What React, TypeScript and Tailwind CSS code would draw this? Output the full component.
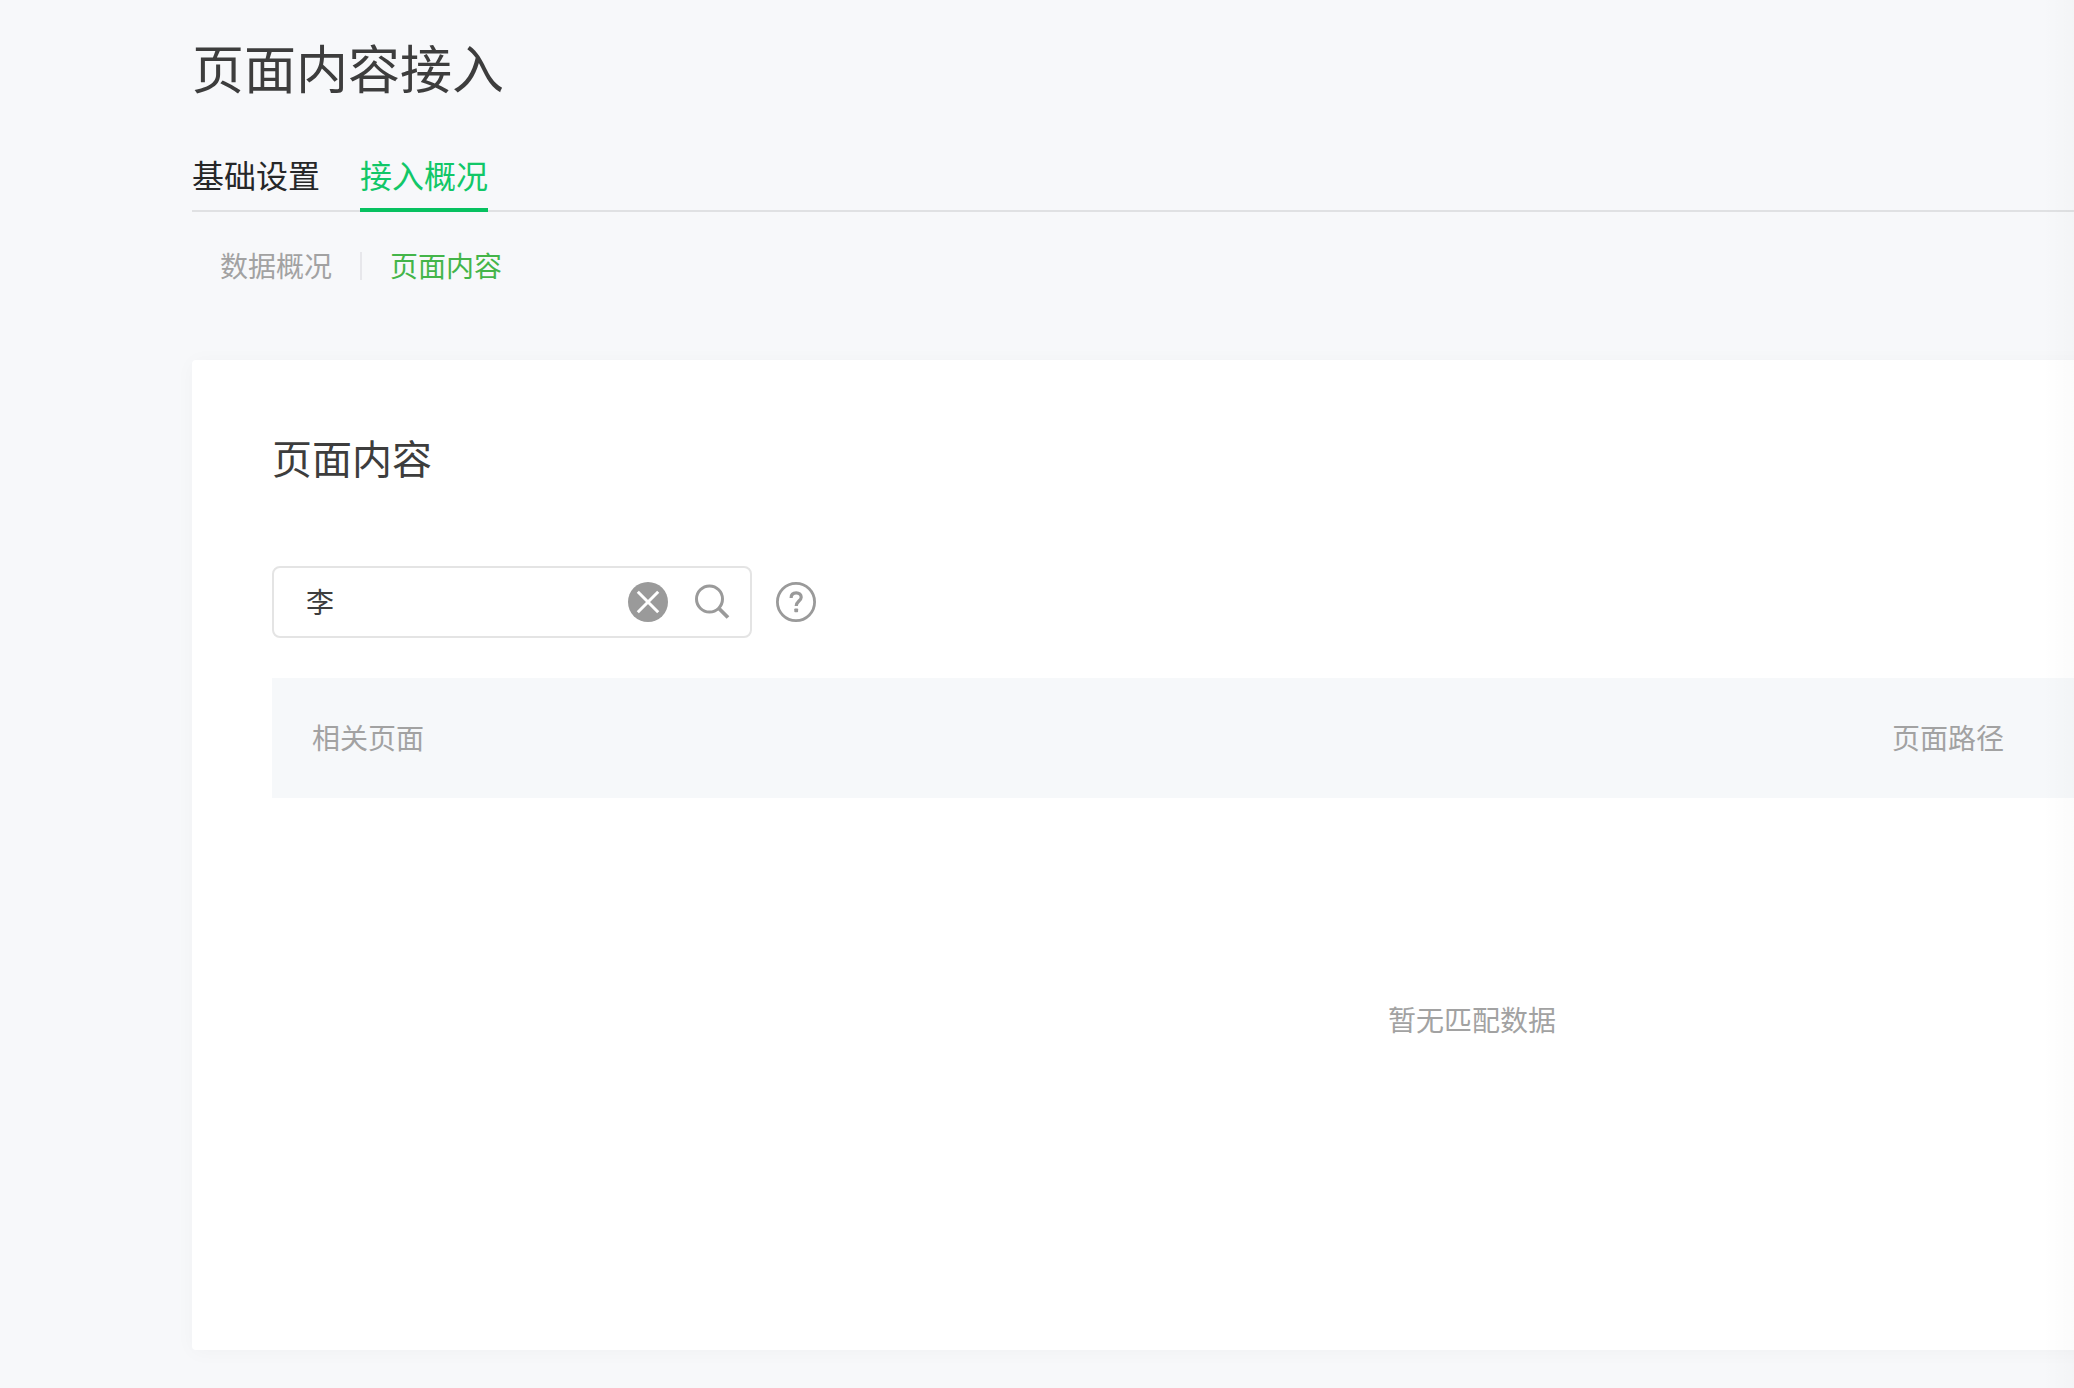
import { clsx } from "clsx"

const tabs = [
  { label: "基础设置", active: false },
  { label: "接入概况", active: true },
]

function ClearIcon() {
  return (
    <svg width="40" height="40" viewBox="0 0 40 40" fill="none">
      <circle cx="20" cy="20" r="20" fill="#9a9a9a" />
      <path d="M9.8 9.8L30.2 30.2M30.2 9.8L9.8 30.2" stroke="#fff" strokeWidth="3" />
    </svg>
  )
}

function SearchIcon() {
  return (
    <svg width="36" height="36" viewBox="0 0 36 36" fill="none" stroke="#9a9a9a">
      <circle cx="15.5" cy="15" r="13" strokeWidth="3" />
      <path d="M24.5 24L34 33.5" strokeWidth="3.8" />
    </svg>
  )
}

function HelpIcon() {
  return (
    <svg width="40" height="40" viewBox="0 0 40 40" fill="none" stroke="#9a9a9a">
      <circle cx="20" cy="20" r="18.6" strokeWidth="2.8" />
      <path d="M15.1 16C15.1 12.6 17.2 10.9 20.2 10.9C23.2 10.9 25.2 12.6 25.2 15.2C25.2 18.8 20.2 19.4 20.2 24" strokeWidth="3.2" />
      <rect x="18.3" y="26.4" width="3.8" height="3.8" rx="0.8" fill="#9a9a9a" stroke="none" />
    </svg>
  )
}

export default function App() {
  return (
    <div className="relative h-[1388px] w-full overflow-hidden bg-[#f7f8fa] pl-48 font-['Noto_Sans_CJK_SC',sans-serif]">
      <div className="w-[2520px]">
        <h1 className="pt-[29px] text-[52px] leading-[76px] text-[#3d3d3d]">页面内容接入</h1>

        {/* Tabs */}
        <div className="mt-[43px] flex h-16 gap-10 border-b-2 border-[#e0e1e3]">
          {tabs.map((tab) => (
            <div
              key={tab.label}
              className={clsx(
                "h-16 text-[32px] leading-[52px]",
                tab.active ? "border-b-4 border-[#07c160] text-[#12c768]" : "text-[#262728]"
              )}
            >
              {tab.label}
            </div>
          ))}
        </div>

        {/* Sub navigation */}
        <div className="mt-8 flex h-11 items-center pl-7 text-[28px] leading-[44px]">
          <span className="-mt-0.5 text-[#a2a2a2]">数据概况</span>
          <span className="mr-7 ml-7 h-7 w-0.5 bg-[#e7e7eb]"></span>
          <span className="-mt-0.5 text-[#44b549]">页面内容</span>
        </div>

        <div className="mt-[72px] h-[990px] rounded bg-white px-20 pt-[67px] shadow-[0_2px_20px_rgba(0,0,0,0.03)]">
          <h2 className="text-[40px] leading-[60px] text-[#3d3d3d]">页面内容</h2>

          <div className="mt-[79px] flex items-center">
            <div className="flex h-[72px] w-[480px] items-center rounded-lg border-2 border-[#e4e4e4] pr-5 pl-8">
              <span className="-mt-0.5 flex-1 text-[28px] leading-[44px] text-[#3d3d3d]">李</span>
              <ClearIcon />
              <span className="ml-[26px]">
                <SearchIcon />
              </span>
            </div>
            <span className="ml-6">
              <HelpIcon />
            </span>
          </div>

          {/* Table */}
          <div className="mt-10 flex h-[120px] w-[2400px] items-center bg-[#f6f8fa] pb-0.5 pl-10 text-[28px] text-[#a2a2a2]">
            <div className="w-[1580px]">相关页面</div>
            <div>页面路径</div>
          </div>
          <div className="mt-[199px] w-[2400px] text-center text-[28px] leading-[44px] text-[#a2a2a2]">
            暂无匹配数据
          </div>
        </div>
      </div>

      {/* Fade on the scroll edge */}
      <div className="pointer-events-none absolute inset-y-0 right-0 w-8 bg-gradient-to-r from-transparent to-black/[0.015]"></div>
    </div>
  )
}
